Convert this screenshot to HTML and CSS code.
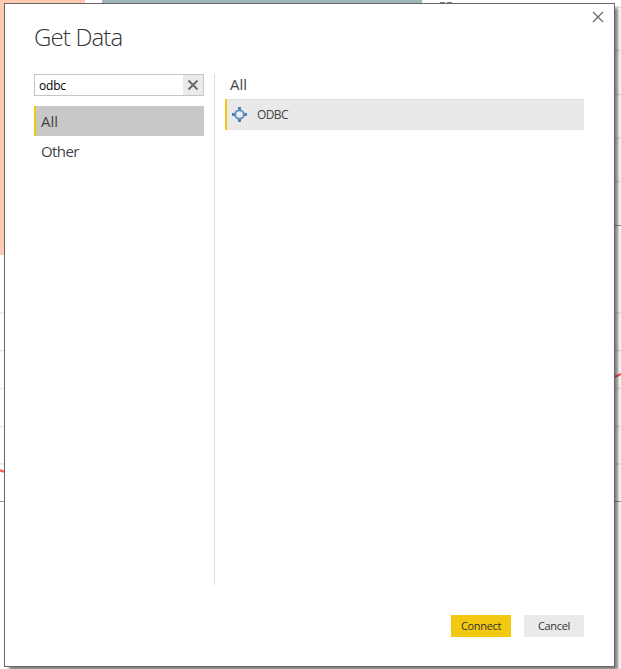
FILE: index.html
```
<!DOCTYPE html>
<html lang="en">
<head>
<meta charset="utf-8">
<title>Get Data</title>
<link rel="stylesheet" href="styles.css">
</head>
<body>
<svg class="report" width="621" height="669" viewBox="0 0 621 669" aria-hidden="true">
  <path fill="#ffc9b2" d="M0 0H85V255H0z"/>
  <path fill="#a0b4bb" d="M102 0H422V10H102z"/>
  <path stroke="#777" d="M440 2.5h5M447 2.5h5"/>
  <path stroke="#e6e6e8" stroke-width="1.5" d="M614 7.2h7M614 50.5h7M614 94.5h7M614 138.2h7M614 181.5h7M0 313h621M0 350.5h621M0 388.5h621M0 426.5h621M0 464h621"/>
  <path stroke="#999" d="M610 225.5h11M0 501.5h621"/>
  <path stroke="#fd625e" stroke-width="2.4" fill="none" d="M0 470.5L8 472.5M610 379L622 373.5"/>
</svg>
<main class="dialog">
  <button class="close" aria-label="Close"><svg width="12" height="12" viewBox="0 0 12 12"><path d="M1 1L11 11M11 1L1 11" stroke="#666" stroke-width="1.2"/></svg></button>
  <h1 class="title">Get Data</h1>
  <div class="content">
    <nav class="sidebar">
      <div class="search">
        <span class="query">odbc</span>
        <button class="clear" aria-label="Clear"><svg width="12" height="12" viewBox="0 0 12 12"><path d="M1.5 1.5L10.5 10.5M10.5 1.5L1.5 10.5" stroke="#6c6c6c" stroke-width="2"/></svg></button>
      </div>
      <div class="category selected"><span class="all">All</span></div>
      <div class="category"><span class="other">Other</span></div>
    </nav>
    <section class="sources">
      <h2 class="heading">All</h2>
      <div class="source">
        <svg width="15" height="15" viewBox="0 0 15 15"><path fill="#4c80b8" d="M6 0h3v3h-3zM6 12h3v3h-3zM0 6h3v3h-3zM12 6h3v3h-3z"/><circle cx="7.5" cy="7.5" r="4.3" fill="#e9eef4" stroke="#6590bf" stroke-width="2"/></svg>
        <span class="name">ODBC</span>
      </div>
    </section>
  </div>
  <footer class="actions">
    <button class="btn primary">Connect</button>
    <button class="btn">Cancel</button>
  </footer>
</main>
</body>
</html>
```
FILE: styles.css
```
* { box-sizing: border-box; }
html, body { margin: 0; height: 669px; overflow: hidden; background: #fff; }
body { display: flow-root; font-family: "Open Sans", "Noto Sans", sans-serif; color: #444; }
button { border: 0; padding: 0; font-family: inherit; }
svg { display: block; flex: none; }
.report { position: absolute; top: 0; left: 0; }
.dialog {
  position: relative;
  width: 611px;
  height: 664px;
  margin: 3px 0 0 4px;
  padding: 17px 30px 0 29px;
  border: 1px solid #666;
  background: #fff;
  box-shadow: 4px 4px 3px -1px rgba(0, 0, 0, .5);
}
.close { position: absolute; top: 7px; right: 10px; background: none; }
.title {
  margin: 0;
  height: 53px;
  font-size: 24px;
  line-height: 32px;
  font-weight: 300;
  letter-spacing: -.85px;
  color: #333;
}
.content { display: flex; height: 511px; }
.sidebar { width: 181px; padding-right: 10px; border-right: 1px solid #dcdcdc; }
.search {
  display: flex;
  width: 170px;
  height: 22px;
  margin-bottom: 10px;
  border: 1px solid #c6c6c6;
}
.query { flex: 1; padding-left: 4px; font-size: 12px; line-height: 22px; letter-spacing: -.2px; color: #000; }
.clear { display: flex; width: 20px; align-items: center; justify-content: center; background: #eaeaea; }
.category {
  height: 30px;
  padding-left: 5px;
  border-left: 2px solid transparent;
  font-size: 15px;
  line-height: 31px;
}
.selected { border-left-color: #f2c811; background: #c8c8c8; }
.all { letter-spacing: 0; }
.other { letter-spacing: -.6px; }
.sources { flex: 1; padding-left: 10px; }
.heading {
  height: 25px;
  margin: 0;
  padding-left: 5px;
  font-size: 15px;
  line-height: 20px;
  font-weight: 400;
}
.source {
  display: flex;
  align-items: center;
  height: 31px;
  padding-left: 5px;
  border-left: 2px solid #f2c811;
  background: #e9e9e9;
  box-shadow: inset 0 1px #dedede;
}
.name { margin-left: 10px; font-size: 12px; letter-spacing: -.6px; }
.actions { display: flex; justify-content: flex-end; gap: 13px; margin-top: 30px; }
.btn {
  width: 60px;
  height: 22px;
  background: #eaeaea;
  color: #333;
  font-size: 11px;
  line-height: 22px;
  letter-spacing: -.35px;
}
.primary { background: #f2c811; }
```
